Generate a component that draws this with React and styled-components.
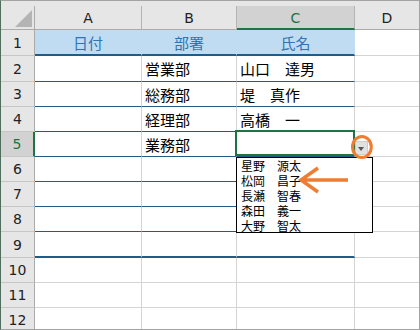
import styled, { createGlobalStyle } from "styled-components";

const Global = createGlobalStyle`
  body {
    margin: 0;
    background: #fff;
  }
`;

const cols = "34px 107px 95px 118px 1fr";

const Sheet = styled.div`
  position: relative;
  width: 420px;
  height: 330px;
  box-sizing: border-box;
  border: 1px solid #a3a3a3;
  border-left-color: #4f6e5d;
  overflow: hidden;
  background: #fff;
  font-family: "Noto Sans CJK JP", sans-serif;
`;

const HeaderRow = styled.div`
  display: grid;
  grid-template-columns: ${cols};
  padding-top: 5px;
  background: #e6e6e6;
`;

const Corner = styled.div`
  position: relative;
  height: 24px;
  box-sizing: border-box;
  border-right: 1px solid #ababab;
  border-bottom: 1px solid #ababab;
  &::after {
    content: "";
    position: absolute;
    right: 2px;
    bottom: 2px;
    width: 17px;
    height: 17px;
    background: #b4b4b4;
    clip-path: polygon(100% 0, 100% 100%, 0 100%);
  }
`;

const ColHead = styled.div`
  height: 24px;
  box-sizing: border-box;
  display: flex;
  align-items: center;
  justify-content: center;
  border-right: ${(p) => (p.$last ? "none" : "1px solid #b4b4b4")};
  border-bottom: ${(p) => (p.$selected ? "2px solid #217346" : "1px solid #ababab")};
  background: ${(p) => (p.$selected ? "#d2d2d2" : "#e6e6e6")};
  color: ${(p) => (p.$selected ? "#217346" : "#222")};
  font-family: "DejaVu Sans", sans-serif;
  font-size: 14px;
  padding-top: ${(p) => (p.$selected ? "1px" : "0")};
`;

const Row = styled.div`
  display: grid;
  grid-template-columns: ${cols};
  height: ${(p) => p.$h}px;
`;

const RowHead = styled.div`
  box-sizing: border-box;
  display: flex;
  align-items: center;
  justify-content: center;
  background: ${(p) => (p.$active ? "#d2d2d2" : "#e6e6e6")};
  border-right: ${(p) => (p.$active ? "2px solid #217346" : "1px solid #ababab")};
  border-bottom: 1px solid #c6c6c6;
  color: ${(p) => (p.$active ? "#217346" : "#222")};
  font-family: "DejaVu Sans", sans-serif;
  font-size: 14px;
`;

const lineStyle = {
  thick: "2px solid #1f5c8a",
  thin: "1px solid #1f5c8a",
};

const Cell = styled.div`
  position: relative;
  box-sizing: border-box;
  display: flex;
  align-items: center;
  justify-content: ${(p) => (p.$fill ? "center" : "flex-start")};
  padding-left: ${(p) => (p.$fill ? "0" : "3px")};
  background: ${(p) => (p.$fill ? "#bfdcf2" : "#fff")};
  border-right: 1px solid ${(p) => (p.$fill ? "transparent" : "#d4d4d4")};
  border-bottom: ${(p) => lineStyle[p.$line] || "1px solid #d4d4d4"};
  color: ${(p) => (p.$fill ? "#2f75b5" : "#000")};
  font-size: 15px;
  white-space: nowrap;
  &::after {
    content: "";
    display: ${(p) => (p.$active ? "block" : "none")};
    position: absolute;
    left: -2px;
    right: -1px;
    top: -2px;
    bottom: 0;
    border: 2px solid #217346;
    pointer-events: none;
  }
`;

const PlainCell = styled.div`
  box-sizing: border-box;
  border-bottom: 1px solid #d4d4d4;
`;

const DropButton = styled.div`
  position: absolute;
  left: 118px;
  top: 9px;
  width: 13px;
  height: 14px;
  box-sizing: border-box;
  background: #e1e1e1;
  border: 1px solid #cdcdcd;
  z-index: 2;
  &::after {
    content: "";
    position: absolute;
    left: 2px;
    top: 5px;
    border-left: 3.5px solid transparent;
    border-right: 3.5px solid transparent;
    border-top: 4px solid #555;
  }
`;

const DropList = styled.div`
  position: absolute;
  left: -1px;
  top: 25px;
  width: 137px;
  height: 76px;
  box-sizing: border-box;
  border: 1px solid #000;
  background: #fff;
  padding: 0 0 0 4px;
  z-index: 3;
`;

const DropItem = styled.div`
  font-size: 12px;
  line-height: 15px;
  color: #000;
  white-space: nowrap;
`;

const Mark = styled.svg`
  position: absolute;
  left: ${(p) => p.$x}px;
  top: ${(p) => p.$y}px;
  z-index: 4;
  overflow: visible;
`;

const rows = [
  { n: 1, h: 26, line: "thick", fill: true, a: "日付", b: "部署", c: "氏名" },
  { n: 2, h: 26, line: "thin", b: "営業部", c: "山口　達男" },
  { n: 3, h: 25, line: "thin", b: "総務部", c: "堤　真作" },
  { n: 4, h: 25, line: "thin", b: "経理部", c: "高橋　一" },
  { n: 5, h: 25, line: "thin", b: "業務部", active: true },
  { n: 6, h: 25, line: "thin" },
  { n: 7, h: 25, line: "thin" },
  { n: 8, h: 25, line: "thin" },
  { n: 9, h: 26, line: "thick" },
  { n: 10, h: 25 },
  { n: 11, h: 25 },
  { n: 12, h: 25 },
];

const choices = ["星野　源太", "松岡　昌子", "長瀬　智春", "森田　義一", "大野　智太"];

export default function App() {
  return (
    <>
      <Global />
      <Sheet>
        <HeaderRow>
          <Corner />
          <ColHead>A</ColHead>
          <ColHead>B</ColHead>
          <ColHead $selected>C</ColHead>
          <ColHead $last>D</ColHead>
        </HeaderRow>
        {rows.map((r) => (
          <Row key={r.n} $h={r.h}>
            <RowHead $active={r.active}>{r.n}</RowHead>
            <Cell $line={r.line} $fill={r.fill}>{r.a}</Cell>
            <Cell $line={r.line} $fill={r.fill}>{r.b}</Cell>
            <Cell $line={r.line} $fill={r.fill} $active={r.active}>
              {r.c}
              {r.active && (
                <>
                  <DropButton />
                  <DropList>
                    {choices.map((c) => (
                      <DropItem key={c}>{c}</DropItem>
                    ))}
                  </DropList>
                </>
              )}
            </Cell>
            <PlainCell />
          </Row>
        ))}
        <Mark $x={347} $y={131} width="28" height="30" viewBox="0 0 28 30">
          <ellipse cx="13.9" cy="15" rx="9.4" ry="10.5" fill="none" stroke="#ed7d31" strokeWidth="3" />
        </Mark>
        <Mark $x={295} $y={163} width="56" height="32" viewBox="0 0 56 32">
          <path d="M5 16 H52 M22 4 L5 16 L22 28" fill="none" stroke="#ed7d31" strokeWidth="3.5" strokeLinejoin="miter" />
        </Mark>
      </Sheet>
    </>
  );
}
